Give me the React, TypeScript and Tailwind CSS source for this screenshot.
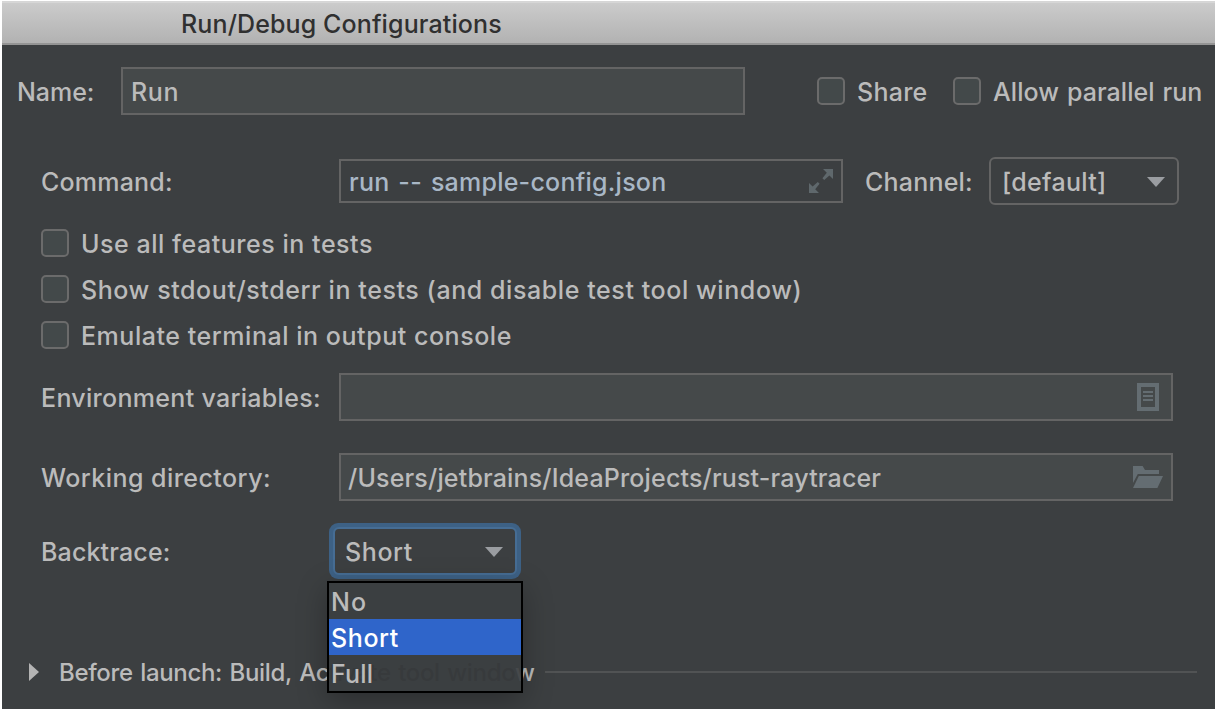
import React from 'react';

function CheckBox() {
  return <span className="box-border size-7 shrink-0 rounded-[5px] border-2 border-[#6b6b6b] bg-[#43494a]" />;
}

function Triangle({ className }: { className?: string }) {
  return (
    <svg className={`shrink-0 ${className ?? ''}`} width="18" height="10" viewBox="0 0 18 10">
      <path d="M0 0H18L9 10Z" fill="#9a9da1" />
    </svg>
  );
}

function ExpandIcon() {
  return (
    <svg className="shrink-0" width="24" height="24" viewBox="0 0 24 24" fill="#5f686c">
      <path d="M14 0H24V10L20.4 6.4L15.2 11L13.4 9.2L17.8 3.8Z" />
      <path d="M10 24H0V14L3.6 17.6L8.8 13L10.6 14.8L6.2 20.2Z" />
    </svg>
  );
}

function ListIcon() {
  return (
    <svg className="shrink-0" width="22" height="28" viewBox="0 0 22 28" fill="#646d72" shapeRendering="crispEdges">
      <path fillRule="evenodd" d="M0 0H22V28H0ZM4 4V24H18V4Z" />
      <path d="M6 8H16V10H6ZM6 12H16V14H6ZM6 16H16V18H6Z" />
    </svg>
  );
}

function FolderIcon() {
  return (
    <svg className="shrink-0" width="30" height="22" viewBox="0 0 30 22" fill="#646d72">
      <path d="M0 0H9.6L12 4H26V8H4.8L0 17Z" />
      <path d="M5.8 10H30L24.4 22H0Z" />
    </svg>
  );
}

function Option({ label, className }: { label: string; className: string }) {
  return <li className={`flex h-9 items-center pl-[2px] pt-px ${className}`}>{label}</li>;
}

export default function App() {
  return (
    <div className="h-[709px] w-[1218px] overflow-hidden bg-white pl-[2px] pr-[3px] pt-px font-['Inter',sans-serif] text-[25px] leading-8 font-[450] whitespace-nowrap text-[#bbbbbb]">
      <div className="flex h-[708px] flex-col bg-[#3c3f41]">
        <header className="flex h-11 shrink-0 items-center border-t-2 border-b-2 border-t-[#d6d6d6] border-b-[#949494] bg-linear-to-b from-[#cbcbcb] to-[#b2b2b2] pl-[179px] pt-[2px] tracking-[0.12px] text-[#303030]">
          Run/Debug Configurations
        </header>

        <div className="mt-[22px] flex h-12 shrink-0 items-center">
          <label className="w-[119px] pl-[15px] pt-[2px] tracking-[-0.05px]">Name:</label>
          <div className="flex h-12 w-[624px] items-center border-2 border-[#646464] bg-[#45494a] pl-2 pt-[2px] tracking-[0.6px]">Run</div>
          <div className="ml-[72px] flex w-[136px] items-center gap-3">
            <CheckBox />
            <span className="pt-[2px] tracking-[0.25px]">Share</span>
          </div>
          <div className="flex items-center gap-3">
            <CheckBox />
            <span className="pt-[2px] tracking-[0.08px] [word-spacing:1px]">Allow parallel run</span>
          </div>
        </div>

        <div className="mt-[42px] flex h-12 shrink-0 items-center">
          <label className="w-[337px] pl-[39px] pt-[2px] tracking-[0.2px]">Command:</label>
          <div className="flex h-11 w-[504px] items-center justify-between border-2 border-[#646464] pl-2 pr-2 text-[#a9b7c6]">
            <span className="pt-[2px] tracking-[0.24px] [word-spacing:2px]">run -- sample-config.json</span>
            <ExpandIcon />
          </div>
          <label className="w-[146px] pl-[22px] pt-[2px] tracking-[0.2px]">Channel:</label>
          <div className="flex h-12 w-[190px] items-center justify-between rounded-[6px] border-2 border-[#646464] pl-[11px] pr-3">
            <span className="pt-[2px] tracking-[0.3px]">[default]</span>
            <Triangle className="mt-[2px]" />
          </div>
        </div>

        <div className="mt-6 flex shrink-0 flex-col gap-[18px] pl-[39px]">
          <div className="flex h-7 items-center gap-3">
            <CheckBox />
            <span className="pt-[2px] tracking-[0.54px]">Use all features in tests</span>
          </div>
          <div className="flex h-7 items-center gap-3">
            <CheckBox />
            <span className="pt-[2px] tracking-[0.58px]">Show stdout/stderr in tests (and disable test tool window)</span>
          </div>
          <div className="flex h-7 items-center gap-3">
            <CheckBox />
            <span className="pt-[2px] tracking-[0.54px]">Emulate terminal in output console</span>
          </div>
        </div>

        <div className="mt-6 flex h-12 shrink-0 items-center">
          <label className="w-[337px] pl-[39px] pt-[2px] tracking-[0.3px]">Environment variables:</label>
          <div className="flex h-12 w-[834px] items-center justify-end border-2 border-[#646464] bg-[#45494a] pr-3">
            <ListIcon />
          </div>
        </div>

        <div className="mt-8 flex h-12 shrink-0 items-center">
          <label className="w-[337px] pl-[39px] pt-[2px] tracking-[0.45px]">Working directory:</label>
          <div className="flex h-12 w-[834px] items-center justify-between border-2 border-[#646464] bg-[#45494a] pl-[7px] pr-2">
            <span className="pt-[2px] tracking-[0.16px]">/Users/jetbrains/IdeaProjects/rust-raytracer</span>
            <FolderIcon />
          </div>
        </div>

        <div className="mt-[22px] flex h-14 shrink-0 items-center">
          <label className="w-[327px] pl-[39px] pt-[2px] tracking-[0.15px]">Backtrace:</label>
          <div className="relative h-14 w-48 rounded-[9px] bg-[#3d6185] p-1">
            <div className="flex h-12 items-center justify-between rounded-[6px] border-2 border-[#466d94] bg-[#3c3f41] pl-[10px] pr-3">
              <span className="pt-[2px] tracking-[0.6px]">Short</span>
              <Triangle className="mt-[2px]" />
            </div>
            <ul className="absolute top-[58px] -left-[2px] z-10 w-[196px] border-2 border-black bg-[#3c3f41]/92 bg-clip-padding shadow-[0_8px_28px_rgba(0,0,0,0.28)]">
              <Option label="No" className="tracking-[1px]" />
              <Option label="Short" className="bg-[#2f65ca] tracking-[0.6px] text-white" />
              <Option label="Full" className="tracking-[0.2px]" />
            </ul>
          </div>
        </div>

        <div className="mt-[77px] flex h-8 shrink-0 items-center pl-[27px] text-[24px]">
          <svg className="shrink-0" width="10" height="18" viewBox="0 0 10 18">
            <path d="M0 0L10 9L0 18Z" fill="#b4b4b4" />
          </svg>
          <span className="w-[506px] pl-5 pt-[2px] tracking-[-0.33px] [word-spacing:1.4px]">
            Before launch: Build, Ac<span className="text-black">tivate tool windo</span>w
          </span>
          <span className="h-[2px] w-[652px] bg-[#515354]" />
        </div>
      </div>
    </div>
  );
}
